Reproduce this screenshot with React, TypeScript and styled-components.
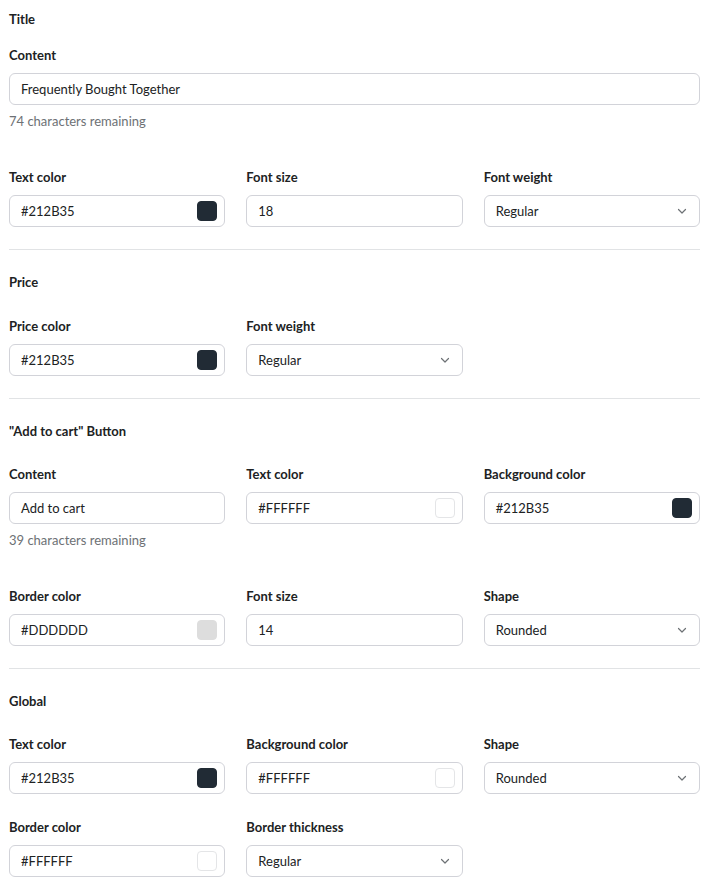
import React from 'react'
import styled, { createGlobalStyle } from 'styled-components'

const GlobalStyle = createGlobalStyle`
  body {
    margin: 0;
    background: #ffffff;
    font-family: Lato, "Noto Sans", sans-serif;
    color: #202223;
  }
`

const Page = styled.div`
  padding: 9px 14px 0 9px;
  font-size: 13px;
  line-height: 20px;
`

const Section = styled.section<{ first?: boolean; titleGap?: number }>`
  display: flex;
  flex-direction: column;
  gap: ${(p) => p.titleGap ?? 23}px;
  padding: ${(p) => (p.first ? '0 0 22px' : '22px 0 22px')};
  border-bottom: 1px solid #e1e3e5;

  &:last-child {
    border-bottom: none;
  }
`

const SectionTitle = styled.h3`
  margin: 0;
  font-size: 13px;
  font-weight: 700;
  line-height: 20px;
`

const Grid = styled.div<{ cols?: number }>`
  display: grid;
  grid-template-columns: repeat(${(p) => p.cols || 3}, 1fr);
  column-gap: 21px;
  row-gap: 23px;
`

const Field = styled.div<{ span?: number }>`
  display: flex;
  flex-direction: column;
  gap: 8px;
  grid-column: span ${(p) => p.span || 1};
`

const Label = styled.label`
  font-size: 13px;
  font-weight: 700;
  line-height: 20px;
`

const Box = styled.div`
  box-sizing: border-box;
  height: 32px;
  display: flex;
  align-items: center;
  justify-content: space-between;
  padding: 0 7px 0 11px;
  border: 1px solid #d2d3d9;
  border-radius: 6px;
  background: #ffffff;
  font-size: 13px;
  color: #202223;
`

const Swatch = styled.span<{ color: string }>`
  width: 20px;
  height: 20px;
  border-radius: 4px;
  background: ${(p) => p.color};
  border: 1px solid ${(p) => (p.color === '#FFFFFF' ? '#e4e5e7' : p.color)};
  box-sizing: border-box;
`

const Helper = styled.div`
  margin-top: -2px;
  padding-bottom: 13px;
  font-size: 13px;
  line-height: 20px;
  color: #6d7175;
`

const Chevron = styled.svg`
  width: 12px;
  height: 12px;
  margin-right: 4px;
`

type FieldProps = { label: string; value: string; helper?: string; span?: number }

const TextField = ({ label, value, helper, span }: FieldProps) => (
  <Field span={span}>
    <Label>{label}</Label>
    <Box>{value}</Box>
    {helper && <Helper>{helper}</Helper>}
  </Field>
)

const ColorField = ({ label, value }: FieldProps) => (
  <Field>
    <Label>{label}</Label>
    <Box>
      {value}
      <Swatch color={value} />
    </Box>
  </Field>
)

const SelectField = ({ label, value }: FieldProps) => (
  <Field>
    <Label>{label}</Label>
    <Box>
      {value}
      <Chevron viewBox="0 0 12 12" fill="none">
        <path d="M2.5 4.5L6 8l3.5-3.5" stroke="#6d7175" strokeWidth="1.2" strokeLinecap="round" strokeLinejoin="round" />
      </Chevron>
    </Box>
  </Field>
)

export default function App() {
  return (
    <Page>
      <GlobalStyle />
      <Section first titleGap={16}>
        <SectionTitle>Title</SectionTitle>
        <Grid>
          <TextField label="Content" value="Frequently Bought Together" helper="74 characters remaining" span={3} />
          <ColorField label="Text color" value="#212B35" />
          <TextField label="Font size" value="18" />
          <SelectField label="Font weight" value="Regular" />
        </Grid>
      </Section>
      <Section titleGap={24}>
        <SectionTitle>Price</SectionTitle>
        <Grid>
          <ColorField label="Price color" value="#212B35" />
          <SelectField label="Font weight" value="Regular" />
        </Grid>
      </Section>
      <Section>
        <SectionTitle>"Add to cart" Button</SectionTitle>
        <Grid>
          <TextField label="Content" value="Add to cart" helper="39 characters remaining" />
          <ColorField label="Text color" value="#FFFFFF" />
          <ColorField label="Background color" value="#212B35" />
          <ColorField label="Border color" value="#DDDDDD" />
          <TextField label="Font size" value="14" />
          <SelectField label="Shape" value="Rounded" />
        </Grid>
      </Section>
      <Section>
        <SectionTitle>Global</SectionTitle>
        <Grid>
          <ColorField label="Text color" value="#212B35" />
          <ColorField label="Background color" value="#FFFFFF" />
          <SelectField label="Shape" value="Rounded" />
          <ColorField label="Border color" value="#FFFFFF" />
          <SelectField label="Border thickness" value="Regular" />
        </Grid>
      </Section>
    </Page>
  )
}
